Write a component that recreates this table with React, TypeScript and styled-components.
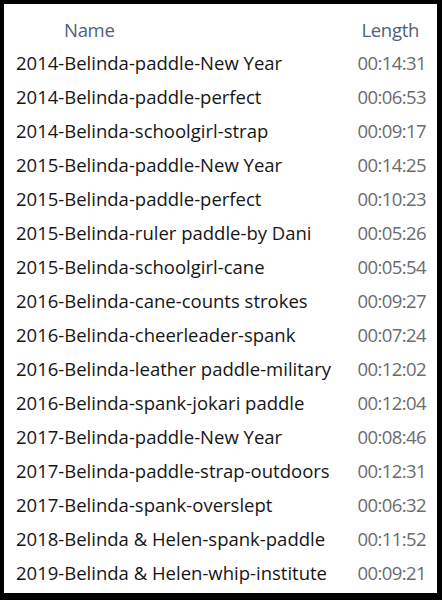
import { FC } from "react";
import styled, { createGlobalStyle } from "styled-components";

const GlobalStyle = createGlobalStyle`
    html, body {
        margin: 0;
        padding: 0;
        background: #000;
    }
`;

const files = [
    ["2014-Belinda-paddle-New Year", "00:14:31"],
    ["2014-Belinda-paddle-perfect", "00:06:53"],
    ["2014-Belinda-schoolgirl-strap", "00:09:17"],
    ["2015-Belinda-paddle-New Year", "00:14:25"],
    ["2015-Belinda-paddle-perfect", "00:10:23"],
    ["2015-Belinda-ruler paddle-by Dani", "00:05:26"],
    ["2015-Belinda-schoolgirl-cane", "00:05:54"],
    ["2016-Belinda-cane-counts strokes", "00:09:27"],
    ["2016-Belinda-cheerleader-spank", "00:07:24"],
    ["2016-Belinda-leather paddle-military", "00:12:02"],
    ["2016-Belinda-spank-jokari paddle", "00:12:04"],
    ["2017-Belinda-paddle-New Year", "00:08:46"],
    ["2017-Belinda-paddle-strap-outdoors", "00:12:31"],
    ["2017-Belinda-spank-overslept", "00:06:32"],
    ["2018-Belinda & Helen-spank-paddle", "00:11:52"],
    ["2019-Belinda & Helen-whip-institute", "00:09:21"],
];

const Frame = styled.div`
    width: 442px;
    height: 600px;
    padding: 4px 5px 7px 4px;
    box-sizing: border-box;
    background: #000;
`;

const Panel = styled.div`
    height: 100%;
    background: #fff;
    font-family: "Open Sans", "Noto Sans", sans-serif;
    font-size: 18.5px;
    display: flex;
    flex-direction: column;
`;

const HeaderRow = styled.div`
    height: 41px;
    display: flex;
    align-items: center;
    padding-top: 9px;
    box-sizing: border-box;
    color: #4e6080;
`;

const HeaderCell = styled.div<{ $align: "left" | "right" }>`
    flex: ${(p) => (p.$align === "left" ? 1 : "none")};
    padding-left: ${(p) => (p.$align === "left" ? "60px" : "0")};
    padding-right: ${(p) => (p.$align === "right" ? "18px" : "0")};
    letter-spacing: -0.3px;
`;

const Row = styled.div`
    height: 34px;
    display: flex;
    align-items: center;
    padding: 0 11px 0 12px;
`;

const NameCell = styled.span`
    flex: 1;
    color: #161616;
    white-space: nowrap;
`;

const LengthCell = styled.span`
    color: #6c6c6c;
    letter-spacing: -0.6px;
`;

const App: FC = () => {
    return (
        <>
            <GlobalStyle />
            <Frame>
                <Panel>
                    <HeaderRow>
                        <HeaderCell $align="left">Name</HeaderCell>
                        <HeaderCell $align="right">Length</HeaderCell>
                    </HeaderRow>
                    {files.map(([name, length]) => (
                        <Row key={name}>
                            <NameCell>{name}</NameCell>
                            <LengthCell>{length}</LengthCell>
                        </Row>
                    ))}
                </Panel>
            </Frame>
        </>
    );
};

export default App;
